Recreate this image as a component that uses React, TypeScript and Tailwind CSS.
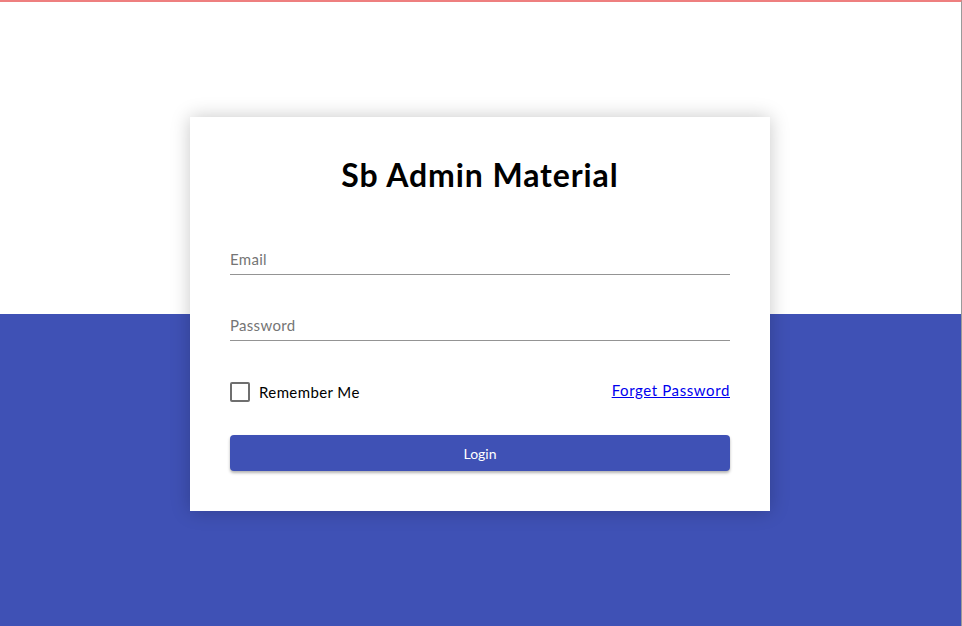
import { useState } from "react";

export default function App() {
  const [remember, setRemember] = useState(false);

  return (
    <div className="h-[626px] w-full overflow-hidden border-t-2 border-r border-t-[#ee7f7f] border-r-[#9a9a9a] bg-[linear-gradient(to_bottom,#ffffff_312px,#3f51b5_312px)] font-['Lato','Open_Sans',sans-serif]">
      <div className="flex justify-center pt-[115px]">
        <div className="mr-px w-[580px] bg-white px-10 pt-[38px] pb-10 shadow-[0_0_18px_rgba(0,0,0,0.22)]">
          <h1 className="text-center text-[32px] leading-[40px] font-bold tracking-[0.9px] text-black">Sb Admin Material</h1>

          <input
            type="email"
            placeholder="Email"
            className="mt-[49px] block h-[31px] w-full border-b border-[#949494] bg-transparent text-[15px] tracking-[0.3px] text-black outline-none placeholder:text-[#757575]"
          />
          <input
            type="password"
            placeholder="Password"
            className="mt-[35px] block h-[31px] w-full border-b border-[#949494] bg-transparent text-[15px] tracking-[0.3px] text-black outline-none placeholder:text-[#757575]"
          />

          <div className="mt-[34px] flex h-[34px] items-center justify-between">
            <label className="flex cursor-pointer items-center gap-[9px] text-[15px] tracking-[0.4px] text-black">
              <span
                onClick={() => setRemember(!remember)}
                className={`h-[20px] w-[20px] rounded-[2px] border-2 ${remember ? "border-[#3f51b5] bg-[#3f51b5]" : "border-[#6f6f6f] bg-white"}`}
              />
              Remember Me
            </label>
            <a href="#" className="-mt-[4px] text-[15px] tracking-[0.6px] text-[#0000ee] underline">
              Forget Password
            </a>
          </div>

          <button className="mt-[26px] block h-9 w-full rounded-[4px] bg-[#3f51b5] text-[14px] text-white shadow-[0_2px_3px_rgba(0,0,0,0.3)]">
            Login
          </button>
        </div>
      </div>
    </div>
  );
}
